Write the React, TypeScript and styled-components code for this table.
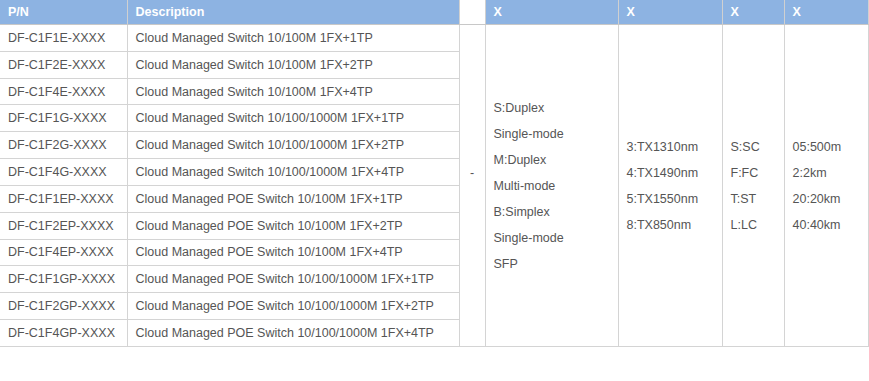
import React from 'react';
import styled, {createGlobalStyle} from "styled-components";

const GlobalStyle = createGlobalStyle`
    html, body {
        margin: 0;
        padding: 0;
        background: #ffffff;
    }
    body {
        font-family: "Liberation Sans", Arial, sans-serif;
    }
`;

const Table = styled.table`
    width: 869px;
    border-collapse: collapse;
    table-layout: fixed;
    font-size: 12.5px;
    color: #555555;
`;

const HeadCell = styled.th<{ $blank?: boolean }>`
    height: 24px;
    padding: 0 8px;
    text-align: left;
    font-weight: bold;
    color: #ffffff;
    background-color: ${props => props.$blank ? '#ffffff' : '#8db3e2'};
    border-left: 1px solid #d0d0d0;
    border-right: 1px solid #d0d0d0;
    border-bottom: 1px solid #c8c8c8;
    &:first-child {
        border-left: 0;
    }
`;

const Row = styled.tr`
    height: 26.82px;
`;

const Cell = styled.td`
    padding: 0 8px;
    border: 1px solid #d4d4d4;
    white-space: nowrap;
    &:first-child {
        border-left: 0;
    }
`;

const SpanCell = styled.td<{ $center?: boolean }>`
    padding: 2px 8px ${props => props.$center ? '26px' : '0'} 8px;
    border: 1px solid #d4d4d4;
    text-align: ${props => props.$center ? 'center' : 'left'};
    vertical-align: middle;
    line-height: 26px;
    white-space: nowrap;
`;

const products = [
    ['DF-C1F1E-XXXX', 'Cloud Managed Switch 10/100M 1FX+1TP'],
    ['DF-C1F2E-XXXX', 'Cloud Managed Switch 10/100M 1FX+2TP'],
    ['DF-C1F4E-XXXX', 'Cloud Managed Switch 10/100M 1FX+4TP'],
    ['DF-C1F1G-XXXX', 'Cloud Managed Switch 10/100/1000M 1FX+1TP'],
    ['DF-C1F2G-XXXX', 'Cloud Managed Switch 10/100/1000M 1FX+2TP'],
    ['DF-C1F4G-XXXX', 'Cloud Managed Switch 10/100/1000M 1FX+4TP'],
    ['DF-C1F1EP-XXXX', 'Cloud Managed POE Switch 10/100M 1FX+1TP'],
    ['DF-C1F2EP-XXXX', 'Cloud Managed POE Switch 10/100M 1FX+2TP'],
    ['DF-C1F4EP-XXXX', 'Cloud Managed POE Switch 10/100M 1FX+4TP'],
    ['DF-C1F1GP-XXXX', 'Cloud Managed POE Switch 10/100/1000M 1FX+1TP'],
    ['DF-C1F2GP-XXXX', 'Cloud Managed POE Switch 10/100/1000M 1FX+2TP'],
    ['DF-C1F4GP-XXXX', 'Cloud Managed POE Switch 10/100/1000M 1FX+4TP'],
];

const modes = ['S:Duplex', 'Single-mode', 'M:Duplex', 'Multi-mode', 'B:Simplex', 'Single-mode', 'SFP'];
const wavelengths = ['3:TX1310nm', '4:TX1490nm', '5:TX1550nm', '8:TX850nm'];
const connectors = ['S:SC', 'F:FC', 'T:ST', 'L:LC'];
const distances = ['05:500m', '2:2km', '20:20km', '40:40km'];

function Lines(props: { items: string[] }) {
    return <>{props.items.map((item, index) => <div key={index}>{item}</div>)}</>;
}

function App() {
    const span = products.length;
    return <>
        <GlobalStyle/>
        <Table>
            <colgroup>
                <col style={{width: 127}}/>
                <col style={{width: 332}}/>
                <col style={{width: 26}}/>
                <col style={{width: 133}}/>
                <col style={{width: 104}}/>
                <col style={{width: 62}}/>
                <col/>
            </colgroup>
            <thead>
            <tr>
                <HeadCell>P/N</HeadCell>
                <HeadCell>Description</HeadCell>
                <HeadCell $blank></HeadCell>
                <HeadCell>X</HeadCell>
                <HeadCell>X</HeadCell>
                <HeadCell>X</HeadCell>
                <HeadCell>X</HeadCell>
            </tr>
            </thead>
            <tbody>
            {products.map((product, index) => <Row key={index}>
                <Cell>{product[0]}</Cell>
                <Cell>{product[1]}</Cell>
                {index === 0 ? <>
                    <SpanCell rowSpan={span} $center>-</SpanCell>
                    <SpanCell rowSpan={span}><Lines items={modes}/></SpanCell>
                    <SpanCell rowSpan={span}><Lines items={wavelengths}/></SpanCell>
                    <SpanCell rowSpan={span}><Lines items={connectors}/></SpanCell>
                    <SpanCell rowSpan={span}><Lines items={distances}/></SpanCell>
                </> : null}
            </Row>)}
            </tbody>
        </Table>
    </>;
}

export default App;
